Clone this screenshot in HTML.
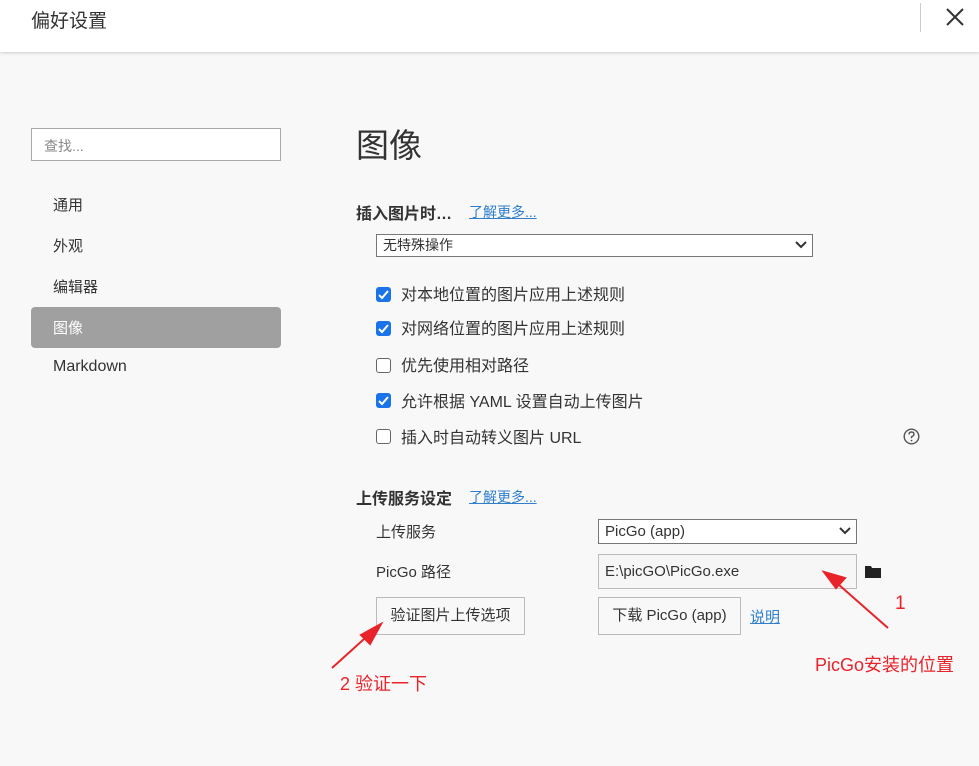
<!DOCTYPE html>
<html><head><meta charset="utf-8"><style>
*{box-sizing:border-box;margin:0;padding:0}
body{width:979px;height:766px;background:#f8f8f8;font-family:"Liberation Sans","Noto Sans CJK SC",sans-serif;color:#333;position:relative;overflow:hidden;font-size:15px}
.a{position:absolute;white-space:nowrap}
.hdr{position:absolute;left:0;top:0;width:979px;height:52px;background:#fff;box-shadow:0 1px 3px rgba(0,0,0,.18)}
.nav{position:absolute;left:53px;font-size:15px;color:#333}
.cb{position:absolute;left:376px;width:15px;height:15px;border-radius:3px}
.on{background:#1a73e8}
.off{border:1px solid #666;background:#fff}
.lbl{position:absolute;left:401px;font-size:16px;color:#333}
.link{color:#2f7fcc;text-decoration:underline;font-size:14px}
.box{position:absolute;border:1px solid #777;background:#fff;font-size:14px;padding-left:6px;line-height:20px}
.btn{position:absolute;border:1px solid #bbb;background:#f8f8f8;font-size:14px;text-align:center}
.red{color:#e8232a;position:absolute;white-space:nowrap;font-size:18px}
</style></head><body>
<div class="hdr"></div>
<div class="a" style="left:31px;top:6px;font-size:19px;color:#333">偏好设置</div>
<div class="a" style="left:920px;top:3px;width:1px;height:29px;background:#ccc"></div>
<svg class="a" style="left:946px;top:8px" width="18" height="18"><path d="M1 1L17 17M17 1L1 17" stroke="#333" stroke-width="2"/></svg>

<div class="a" style="left:31px;top:128px;width:250px;height:33px;border:1px solid #aaa;background:#fff;font-size:14px;color:#888;padding:7px 0 0 12px">查找...</div>
<div class="nav" style="top:194px">通用</div>
<div class="nav" style="top:235px">外观</div>
<div class="nav" style="top:276px">编辑器</div>
<div class="a" style="left:31px;top:307px;width:250px;height:41px;background:#a0a0a0;border-radius:4px"></div>
<div class="nav" style="top:317px;color:#fff">图像</div>
<div class="nav" style="top:358px;font-size:16px">Markdown</div>

<div class="a" style="left:356px;top:119px;font-size:33px;color:#333">图像</div>
<div class="a" style="left:356px;top:200px;font-size:16px;font-weight:bold">插入图片时…</div>
<div class="a link" style="left:469px;top:202px">了解更多...</div>
<div class="box" style="left:376px;top:234px;width:437px;height:23px">无特殊操作</div>
<svg class="a" style="left:795px;top:241px" width="12" height="8"><path d="M1 1L6 6L11 1" stroke="#333" stroke-width="2" fill="none"/></svg>

<div class="cb on" style="top:287px"></div><svg class="a" style="left:378px;top:289px" width="11" height="11"><path d="M1 6L4 9L10 2" stroke="#fff" stroke-width="2" fill="none"/></svg>
<div class="lbl" style="top:281px">对本地位置的图片应用上述规则</div>
<div class="cb on" style="top:321px"></div><svg class="a" style="left:378px;top:323px" width="11" height="11"><path d="M1 6L4 9L10 2" stroke="#fff" stroke-width="2" fill="none"/></svg>
<div class="lbl" style="top:315px">对网络位置的图片应用上述规则</div>
<div class="cb off" style="top:358px"></div>
<div class="lbl" style="top:352px">优先使用相对路径</div>
<div class="cb on" style="top:393px"></div><svg class="a" style="left:378px;top:395px" width="11" height="11"><path d="M1 6L4 9L10 2" stroke="#fff" stroke-width="2" fill="none"/></svg>
<div class="lbl" style="top:388px">允许根据 YAML 设置自动上传图片</div>
<div class="cb off" style="top:429px"></div>
<div class="lbl" style="top:424px">插入时自动转义图片 URL</div>
<svg class="a" style="left:903px;top:428px" width="17" height="17"><circle cx="8.5" cy="8.5" r="7.3" stroke="#555" stroke-width="1.4" fill="none"/><path d="M6 6.5Q6 4 8.5 4Q11 4 11 6.3Q11 7.8 8.5 8.8V10.3" stroke="#555" stroke-width="1.4" fill="none"/><circle cx="8.5" cy="12.6" r="0.9" fill="#555"/></svg>

<div class="a" style="left:356px;top:485px;font-size:16px;font-weight:bold">上传服务设定</div>
<div class="a link" style="left:469px;top:487px">了解更多...</div>
<div class="a" style="left:376px;top:521px;font-size:15px">上传服务</div>
<div class="box" style="left:598px;top:519px;width:259px;height:25px;line-height:23px;font-size:15px">PicGo (app)</div>
<svg class="a" style="left:839px;top:527px" width="12" height="8"><path d="M1 1L6 6L11 1" stroke="#333" stroke-width="2" fill="none"/></svg>
<div class="a" style="left:376px;top:561px;font-size:15px">PicGo 路径</div>
<div class="box" style="left:598px;top:554px;width:259px;height:35px;line-height:33px;border-color:#bbb;background:#f6f6f6;font-size:15px">E:\picGO\PicGo.exe</div>
<svg class="a" style="left:865px;top:565px" width="16" height="13"><path d="M0 1H6L7 3H16V13H0Z" fill="#222"/></svg>
<div class="btn" style="left:376px;top:597px;width:149px;height:38px;line-height:36px;font-size:15px">验证图片上传选项</div>
<div class="btn" style="left:598px;top:597px;width:143px;height:38px;line-height:36px;font-size:15px">下载 PicGo (app)</div>
<div class="a link" style="left:750px;top:606px;font-size:15px">说明</div>

<svg class="a" style="left:0;top:0" width="979" height="766"><g stroke="#e8232a" stroke-width="2" fill="#e8232a">
<line x1="888" y1="628" x2="830" y2="577"/><path d="M824 572L845 578L836 588Z"/>
<line x1="332" y1="668" x2="374" y2="630"/><path d="M381 624L370 644L361 635Z"/></g></svg>
<div class="red" style="left:895px;top:593px;font-size:19px">1</div>
<div class="red" style="left:815px;top:651px">PicGo安装的位置</div>
<div class="red" style="left:340px;top:670px">2 验证一下</div>
</body></html>
